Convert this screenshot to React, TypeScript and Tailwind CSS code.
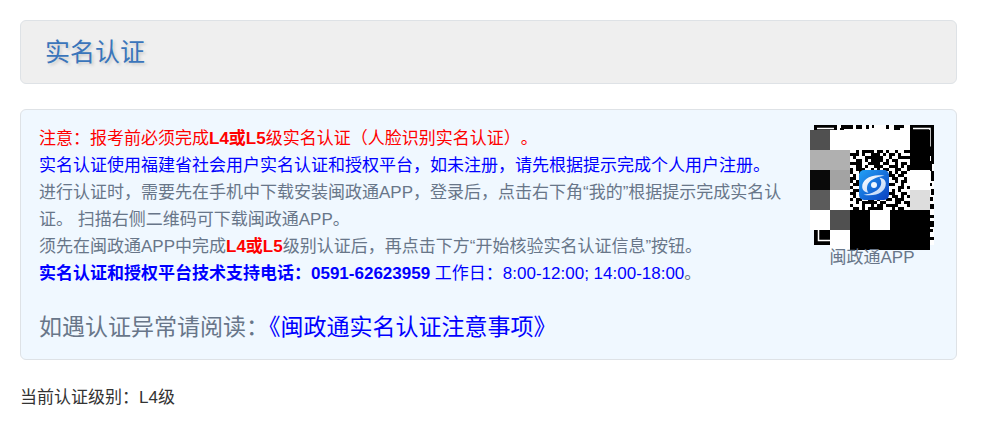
import React from "react";

// Visible middle of the code, one character per module
const MODULES = [
  "..#.####.##.#..#..##",
  "###.#..###.#.##.#...",
  ".#...######..#..####",
  "..##.#.####.#.##....",
  "####..####.##..#.##.",
  "..##.#..###..###.#.#",
  "#.###..#.#.##..##..#",
  "#..#......#..#.#.##.",
  ".#........#.###.##..",
  "##........#...##..#.",
  "#.#........##..#.##.",
  ".##.......#..##..#..",
  "#.........#.#...##.#",
  ".##.......#.#.#.#...",
  "##.#......##.##..##.",
  ".#..#.....#...##.#.#",
  "#.##..##.#..##.###..",
  "..#.#####.##...##.##",
  "#...#..#.##.####...#",
  ".##.#.#####...#.##..",
];

// Mosaic blocks laid over the code: x, y, fill
const BLOCKS: [number, number, string][] = [
  [0, 5, "#505050"],
  [20, 5, "#fff"],
  [40, 5, "#fff"],
  [60, 5, "#fff"],
  [80, 5, "#fff"],
  [100, 5, "#000"],
  [0, 25, "#b0b0b0"],
  [20, 25, "#b0b0b0"],
  [100, 25, "#000"],
  [0, 45, "#0a0a0a"],
  [20, 45, "#a3a3a3"],
  [100, 45, "#fff"],
  [0, 65, "#5b5b5b"],
  [20, 65, "#fff"],
  [100, 65, "#ddd"],
  [0, 85, "#fff"],
  [20, 85, "#505050"],
  [40, 85, "#000"],
  [60, 85, "#fff"],
  [80, 85, "#000"],
  [100, 85, "#000"],
  [20, 105, "#fff"],
  [40, 105, "#000"],
  [60, 105, "#000"],
  [80, 105, "#000"],
  [100, 105, "#000"],
];

const QrCode = () => (
  <svg
    className="block h-[125px] w-[124px]"
    viewBox="0 0 124 125"
    shapeRendering="crispEdges"
    role="img"
    aria-label="闽政通APP"
  >
    <defs>
      <linearGradient id="logo" x1="0" y1="0" x2="1" y2="1">
        <stop offset="0" stopColor="#22a0f5" />
        <stop offset="1" stopColor="#0b3fc0" />
      </linearGradient>
      <linearGradient id="swirl" x1="0" y1="0" x2="1" y2="1">
        <stop offset="0" stopColor="#fff" />
        <stop offset="1" stopColor="#b9d3f7" />
      </linearGradient>
    </defs>
    <rect x="4" width="120" height="120" fill="#fff" />
    {/* corner finders */}
    <path d="M4 0h23v23H4z M100 0h24v24h-24z M4 97h23v23H4z" fill="#000" />
    <path d="M7 3.500h17M103 3.500h17v18M8.500 100v15.500h16" fill="none" stroke="#fff" strokeWidth="1.500" shapeRendering="auto" />
    {/* upper edge */}
    <path d="M31 0h12v4H31z M46 0h6v4h-6z M56 0h3v4h-3z M62 0h2v3h-2z M76 0h3v4h-3z M84 0h10v3h-4v2h-6z M30 3h4v2h-4z" fill="#000" />
    {/* right edge */}
    <path
      d="M118 24h6v7h-6z M121 31h3v5h-3z M118 36h6v3h-6z M118 39h4v7h-4z M121 46h3v10h-3z M118 58h4v3h-4z M121 64h3v6h-3z M118 72h5v4h-5z M120 79h4v5h-4z M120 90h4v3h-4z M120 96h4v6h-4z M120 104h3v3h-3z M120 112h4v3h-4z"
      fill="#000"
    />
    {MODULES.map((row, y) =>
      row
        .split("")
        .map((cell, x) =>
          cell === "#" ? <rect key={`${x}-${y}`} x={40 + x * 3} y={25 + y * 3} width="3" height="3" /> : null
        )
    )}
    {BLOCKS.map(([x, y, fill]) => (
      <rect key={`${x}-${y}`} x={x} y={y} width="20" height="20" fill={fill} />
    ))}
    {/* app logo */}
    <g shapeRendering="auto">
      <rect x="49" y="45" width="30" height="30" rx="5" fill="url(#logo)" />
      <path d="M52.200 62C52 54.500 61 48.500 74.500 50.800C66 51.800 58.500 55.500 57.200 61C56.600 64 57 66 58.500 67.800C54.500 67.200 52.300 65 52.200 62Z" fill="url(#swirl)" />
      <path d="M75.800 58.500C76 66.500 66.500 72.200 53.500 69.800C62 69 69.500 65.500 71 59.800C71.700 57 71 54.500 69.500 52.800C73.800 53.500 75.700 55.500 75.800 58.500Z" fill="url(#swirl)" />
      <circle cx="64" cy="60" r="3" fill="#eef6ff" />
    </g>
  </svg>
);

export default function App() {
  return (
    <main className="bg-white pt-5 pr-6 pb-5 pl-5 font-['Liberation_Sans','Noto_Sans_CJK_SC',sans-serif] text-[17px] leading-[27px] text-[#333]">
      <header className="rounded-md border border-[#dee2e6] bg-[#efefef] px-6 py-[13px]">
        <h1 className="text-[25px] leading-9 text-[#3a75bb] [text-shadow:2px_2px_3px_#ccc]">实名认证</h1>
      </header>

      <section className="mt-[25px] flex items-start gap-4 rounded-md border border-[#dee2e6] bg-[#f0f8ff] pt-[15px] pr-[22px] pb-4 pl-[18px] text-[#687689]">
        <div className="min-w-0 flex-1">
          <p className="text-[#f00] [text-spacing-trim:space-all]">
            注意：报考前必须完成<b className="font-bold">L4或L5</b>级实名认证（人脸识别实名认证）。
          </p>
          <p className="text-[#00f]">
            实名认证使用福建省社会用户实名认证和授权平台，如未注册，请先根据提示完成个人用户注册。
          </p>
          <p>
            进行认证时，需要先在手机中下载安装闽政通APP，登录后，点击右下角“我的”根据提示完成实名认证。 扫描右侧二维码可下载闽政通APP。
          </p>
          <p>
            须先在闽政通APP中完成<b className="font-bold text-[#f00]">L4或L5</b>级别认证后，再点击下方“开始核验实名认证信息”按钮。
          </p>
          <p>
            <span className="text-[#00f]">
              <b className="font-bold">实名认证和授权平台技术支持电话：0591-62623959</b> 工作日：8:00-12:00; 14:00-18:00
            </span>
            。
          </p>
          <p className="mt-6 text-[23px] leading-8">
            如遇认证异常请阅读：
            <a href="#notice" className="text-[#00f]">
              《闽政通实名认证注意事项》
            </a>
          </p>
        </div>

        <figure className="shrink-0 text-center">
          <QrCode />
          <figcaption className="leading-4">闽政通APP</figcaption>
        </figure>
      </section>

      <p className="mt-6">当前认证级别：L4级</p>
    </main>
  );
}
